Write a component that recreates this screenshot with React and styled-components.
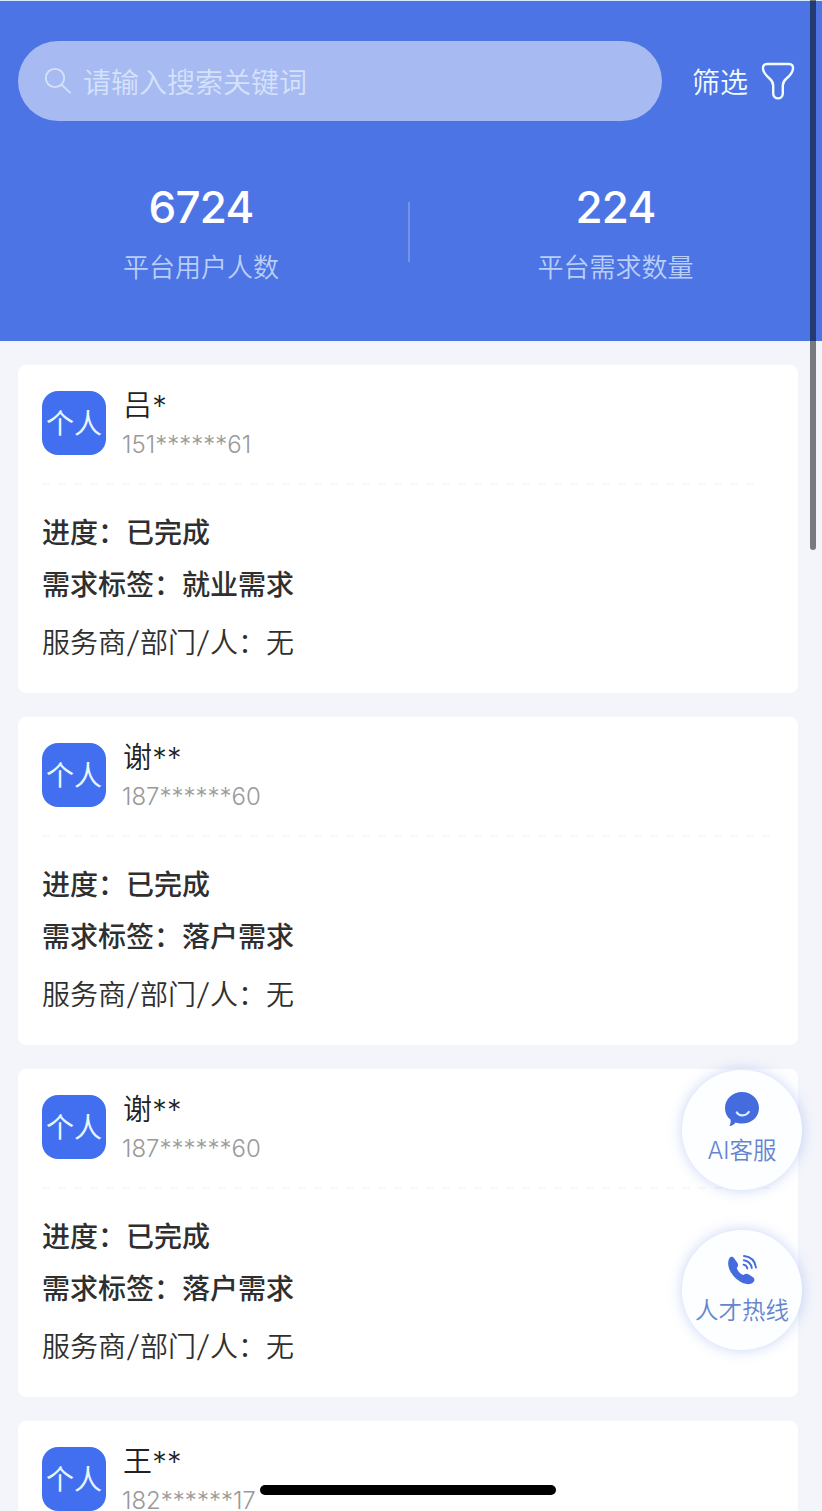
import React from "react";
import styled, { createGlobalStyle } from "styled-components";

const users = [
  { name: "吕*", phone: "151******61", tag: "就业需求", line: 720 },
  { name: "谢**", phone: "187******60", tag: "落户需求", line: 732 },
  { name: "谢**", phone: "187******60", tag: "落户需求", line: 732 },
  { name: "王**", phone: "182******17", tag: "", line: 732 },
];

function UserCard({ user }) {
  return (
    <Card>
      <CardTop>
        <Avatar>个人</Avatar>
        <div>
          <Name>{user.name}</Name>
          <Phone>{user.phone}</Phone>
        </div>
      </CardTop>
      {user.tag && (
        <>
          <Dashed $width={user.line} />
          <Line $bold>进度：已完成</Line>
          <Line $bold>需求标签：{user.tag}</Line>
          <Line $top={6}>
            服务商<Slash>/</Slash>部门<Slash>/</Slash>人：无
          </Line>
        </>
      )}
    </Card>
  );
}

function App() {
  return (
    <>
      <GlobalStyle />
      <Page>
        <Header>
          <SearchRow>
            <SearchBox>
              <svg width="28" height="28" viewBox="0 0 28 28" fill="none" stroke="currentColor" strokeWidth="1.8" strokeLinecap="round">
                <circle cx="11" cy="11" r="9.2" />
                <path d="M17.8 17.8 L26 25.6" />
              </svg>
              <span>请输入搜索关键词</span>
            </SearchBox>
            <Filter>
              筛选
              <svg width="34" height="38" viewBox="0 0 34 38" fill="none" stroke="currentColor" strokeWidth="2.4" strokeLinejoin="round">
                <path d="M6 2 H28 C31 2 32.200 3.800 32 6.800 C31.700 10.500 29.500 13 25.500 16.500 C22.500 19 21.800 20.500 21.800 23.500 V31.500 C21.800 38 12.200 38 12.200 31.500 V23.500 C12.200 20.500 11.500 19 8.500 16.500 C4.500 13 2.300 10.500 2 6.800 C1.800 3.800 3 2 6 2 Z" />
              </svg>
            </Filter>
          </SearchRow>
          <Stats>
            <Stat>
              <Count>6724</Count>
              <Label>平台用户人数</Label>
            </Stat>
            <Divider />
            <Stat $right>
              <Count>224</Count>
              <Label>平台需求数量</Label>
            </Stat>
          </Stats>
        </Header>

        <List>
          {users.map((user, idx) => {
            return <UserCard key={idx} user={user} />;
          })}
        </List>

        <FloatButtons>
          <Round>
            <svg width="36" height="36" viewBox="0 0 36 36">
              <path d="M18 1 C27.500 1 35 8 35 17 C35 26 27.500 32.600 18 32.600 C15.500 32.600 13.500 32.200 11.600 31.500 C10 33.600 8 35 5.300 35 C6.500 33 6.900 31 6.600 28.700 C3 26 1 22 1 17 C1 8 8.500 1 18 1 Z" fill="#456cdf" />
              <path d="M12.800 21.500 C15 25.300 22 25.300 24.800 21" fill="none" stroke="#d9efff" strokeWidth="2.200" strokeLinecap="round" />
            </svg>
            AI客服
          </Round>
          <Round>
            <svg width="36" height="36" viewBox="0 0 36 36" fill="none">
              <path d="M5.200 7.500 C6.500 5 9 5.300 10.300 7.500 L13.500 12 C14.500 13.800 14.300 15 12.800 17 C13.500 20 16 23 19.500 24 C21.500 22.500 23 22.500 24.800 23.500 L29 26.200 C31 27.800 30.800 30 29 31.500 C26 34.500 19 33.500 12.500 28 C5 21.500 2.500 13 5.200 7.500 Z" fill="#456cdf" />
              <path d="M19.500 13.600 C21.800 14 23 15.300 23.400 17.500 M19.800 9.200 C24.500 10 27 12.500 27.800 17 M20 5 C27 5.800 31.200 10 32 16.500" stroke="#456cdf" strokeWidth="1.900" strokeLinecap="round" />
            </svg>
            人才热线
          </Round>
        </FloatButtons>
        <ScrollBar />
        <HomeBar />
      </Page>
    </>
  );
}

const GlobalStyle = createGlobalStyle`
  * {
    box-sizing: border-box;
  }
  body {
    margin: 0;
    font-family: Inter, "Noto Sans CJK SC", sans-serif;
  }
`;

const Page = styled.div`
  position: relative;
  width: 822px;
  height: 1511px;
  overflow: hidden;
  background: #f3f5fa;
`;

const Header = styled.div`
  height: 341px;
  padding: 40px 27px 0 18px;
  border-top: 1px solid #d5ecff;
  background: #4d74e4;
  color: #fff;
`;

const SearchRow = styled.div`
  display: flex;
  align-items: center;
  justify-content: space-between;
`;

const SearchBox = styled.div`
  display: flex;
  align-items: center;
  gap: 11px;
  width: 644px;
  height: 80px;
  padding-left: 26px;
  border-radius: 40px;
  background: #a7baf2;
  color: #d5e2fb;
  font-size: 28px;
  font-weight: 350;
  line-height: 40px;

  span {
    padding-top: 3px;
  }
`;

const Filter = styled.div`
  display: flex;
  align-items: center;
  gap: 13px;
  font-size: 28px;
  font-weight: 350;
  color: #f2fbff;
`;

const Stats = styled.div`
  display: flex;
  padding-top: 59px;
`;

const Stat = styled.div`
  width: ${(props) => (props.$right ? 411 : 366)}px;
  flex-shrink: 0;
  text-align: center;
`;

const Count = styled.div`
  height: 54px;
  line-height: 55px;
  font-size: 44px;
  font-weight: 500;
  letter-spacing: -0.8px;
`;

const Label = styled.div`
  height: 40px;
  margin-top: 13px;
  line-height: 41px;
  font-size: 26px;
  font-weight: 350;
  color: #b9cff8;
`;

const Divider = styled.div`
  flex-shrink: 0;
  width: 2px;
  height: 60px;
  margin: 22px 0 0 24px;
  background: #7193ec;
`;

const List = styled.div`
  display: flex;
  flex-direction: column;
  gap: 24px;
  padding: 24px 24px 0 18px;
`;

const Card = styled.div`
  flex-shrink: 0;
  height: 328px;
  padding: 26px 24px 0;
  border-radius: 8px;
  background: #fff;
`;

const CardTop = styled.div`
  display: flex;
  gap: 16px;
  height: 92px;
`;

const Avatar = styled.div`
  width: 64px;
  height: 64px;
  border-radius: 16px;
  background: #426ff0;
  color: #e8f7ff;
  font-size: 28px;
  line-height: 66px;
  text-align: center;
  white-space: nowrap;
`;

const Name = styled.div`
  height: 36px;
  margin: -3px 0 0 1px;
  line-height: 36px;
  font-size: 29px;
  font-weight: 350;
  letter-spacing: 0.3px;
  color: #222;
`;

const Phone = styled.div`
  height: 32px;
  margin-top: 4px;
  line-height: 33px;
  font-size: 24px;
  font-weight: 300;
  color: #999;
`;

const Dashed = styled.div`
  width: ${(props) => props.$width}px;
  height: 2px;
  background: repeating-linear-gradient(90deg, #f8f8fa 0 8px, #fff 8px 16px);
`;

const Line = styled.div`
  height: 52px;
  margin-top: ${(props) => props.$top || 0}px;
  line-height: 52px;
  font-size: 28px;
  font-weight: ${(props) => (props.$bold ? 500 : 350)};
  color: #2f2f2f;

  ${Dashed} + & {
    margin-top: 22px;
  }
`;

const Slash = styled.span`
  display: inline-block;
  width: 14px;
  font-size: 30px;
  font-weight: 300;
  line-height: 40px;
  text-align: center;
  transform: skewX(-7deg);
`;

const FloatButtons = styled.div`
  position: absolute;
  top: 1070px;
  right: 20px;
  display: flex;
  flex-direction: column;
  gap: 40px;
`;

const Round = styled.div`
  display: flex;
  flex-direction: column;
  align-items: center;
  width: 120px;
  height: 120px;
  padding-top: 21px;
  border-radius: 50%;
  background: #fdfeff;
  box-shadow: 0 0 14px rgba(77, 116, 228, 0.3);
  color: #6685cf;
  font-size: 23.5px;
  font-weight: 350;
  line-height: 47px;
`;

const ScrollBar = styled.div`
  position: absolute;
  top: -10px;
  right: 6px;
  width: 6px;
  height: 560px;
  border-radius: 3px;
  background: rgba(0, 0, 0, 0.5);
`;

const HomeBar = styled.div`
  position: absolute;
  left: 260px;
  bottom: 16px;
  width: 296px;
  height: 10px;
  border-radius: 5px;
  background: #000;
`;

export default App;
